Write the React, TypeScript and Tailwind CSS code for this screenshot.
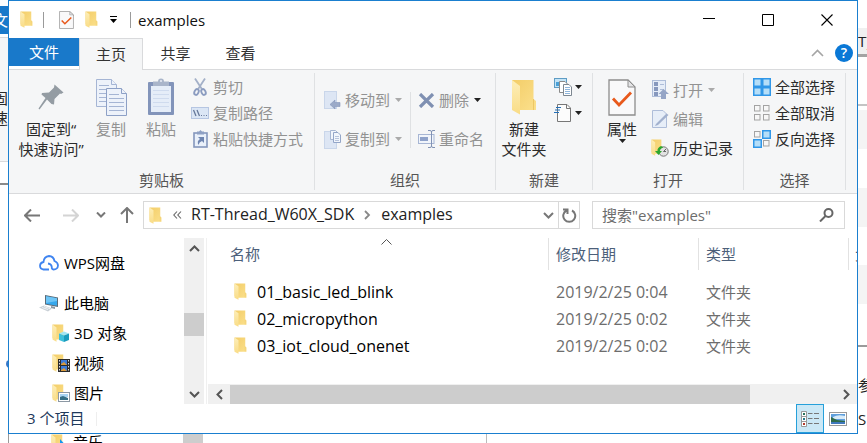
import type { ReactNode } from "react";

/* ---------- icons ---------- */

function Folder({ className = "" }: { className?: string }) {
  return (
    <svg viewBox="0 0 26 36" preserveAspectRatio="none" className={"shrink-0 " + className} aria-hidden="true">
      <defs>
        <linearGradient id="fBack" x1="0" y1="0" x2="1" y2="1">
          <stop offset="0" stopColor="#f3cd68" />
          <stop offset="1" stopColor="#fbe08c" />
        </linearGradient>
        <linearGradient id="fFlap" x1="0" y1="0" x2="0" y2="1">
          <stop offset="0" stopColor="#fdeeb8" />
          <stop offset="1" stopColor="#f9dc86" />
        </linearGradient>
      </defs>
      <path d="M1 1H22.500V20L25 22V31H8L1 28Z" fill="url(#fBack)" />
      <path d="M1 1L9 7V35.500L1 31Z" fill="url(#fFlap)" />
      <path d="M22.500 20V31" stroke="#e6bd58" strokeWidth="0.700" />
    </svg>
  );
}

function Caret({ className = "fill-[#222]" }: { className?: string }) {
  return (
    <svg width="7" height="4" viewBox="0 0 7 4" className={"shrink-0 " + className} aria-hidden="true">
      <path d="M0 0H7L3.500 4Z" />
    </svg>
  );
}

function CheckDoc({ className = "" }: { className?: string }) {
  return (
    <svg viewBox="0 0 28 37" preserveAspectRatio="none" className={"shrink-0 " + className} aria-hidden="true">
      <path d="M1 1H20L27 8V36H1Z" fill="#f9f9fa" stroke="#8d8d8d" strokeWidth="1.300" />
      <path d="M20 1V8H27Z" fill="#e4e4e6" stroke="#8d8d8d" />
      <path d="M5 19.500L11 26L23 13.500" fill="none" stroke="#e8591c" strokeWidth="2.800" />
    </svg>
  );
}

function Pin() {
  return (
    <svg width="26" height="26" viewBox="0 0 26 26" aria-hidden="true">
      <path d="M16.500 0.500L25.500 8.500L23 10L22 9.500L16.500 15L16 20.500L13.500 20L9 15.500L1.500 25.500L0.500 24.500L7.500 14L3.500 10.500L4 9L11 8.500L16 3.500Z" fill="#949ca3" />
    </svg>
  );
}

function CopyPages() {
  return (
    <svg width="31" height="37" viewBox="0 0 31 37" aria-hidden="true">
      <g fill="#edf2fa" stroke="#a5b5d4">
        <path d="M0.500 0.500H15.500L20.500 5.500V27.500H0.500Z" />
        <path d="M15.500 0.500V5.500H20.500" />
        <path d="M3 6.500H13M3 10.500H17M3 14.500H17M3 18.500H17M3 22.500H17" />
        <path d="M10.500 9.500H25.500L30.500 14.500V36.500H10.500Z" stroke="#8da0c6" />
        <path d="M25.500 9.500V14.500H30.500" stroke="#8da0c6" />
        <path d="M13 15.500H23M13 19.500H28M13 23.500H28M13 27.500H28M13 31.500H28" />
      </g>
    </svg>
  );
}

function Clipboard() {
  return (
    <svg width="26" height="38" viewBox="0 0 26 38" aria-hidden="true">
      <rect x="0" y="4" width="26" height="33" rx="1" fill="#8294ba" />
      <rect x="3" y="8" width="20" height="26" fill="#e5edf8" />
      <path d="M5 12.500H21M5 16.500H21M5 20.500H21M5 24.500H21M5 28.500H21" stroke="#cfdbee" />
      <path d="M5 3.500H10Q10 0.500 13 0.500T16 3.500H21V8H5Z" fill="#a9b5ca" />
      <circle cx="13" cy="3" r="1" fill="#e9edf4" />
    </svg>
  );
}

function Scissors() {
  return (
    <svg width="18" height="18" viewBox="0 0 18 18" aria-hidden="true">
      <path d="M4 0.500L11.500 12M14 0.500L6.500 12" stroke="#a3b0c8" strokeWidth="1.800" />
      <g fill="none" stroke="#8b9cc0" strokeWidth="1.900">
        <ellipse cx="5.500" cy="14" rx="2" ry="3" transform="rotate(25 5.500 14)" />
        <ellipse cx="12.500" cy="14" rx="2" ry="3" transform="rotate(-25 12.500 14)" />
      </g>
    </svg>
  );
}

function PathIcon() {
  return (
    <svg width="18" height="12" viewBox="0 0 18 12" aria-hidden="true">
      <rect x="0.500" y="0.500" width="17" height="11" fill="#dbe6f5" stroke="#b6c6e2" />
      <path d="M2.500 3L5 9M6 3L8.500 9" stroke="#66789a" strokeWidth="1.300" />
      <path d="M10 8.500H11M12.500 8.500H13.500M15 8.500H16" stroke="#66789a" />
    </svg>
  );
}

function ShortcutIcon() {
  return (
    <svg width="15" height="18" viewBox="0 0 15 18" aria-hidden="true">
      <rect x="1" y="3" width="13" height="14" fill="#e9f0fa" stroke="#8496bc" strokeWidth="1.600" />
      <path d="M4 1.500H6L7.500 0L9 1.500H11V4.500H4Z" fill="#8ea0c4" />
      <path d="M5 7H11V13L9 11Q6 12 5.500 15Q3.500 11 7 9Z" fill="#6f85b0" />
    </svg>
  );
}

function MoveTo() {
  return (
    <svg width="17" height="19" viewBox="0 0 17 19" aria-hidden="true">
      <rect x="0.500" y="0.500" width="12" height="17" fill="#dde6f4" stroke="#c9d6ea" />
      <path d="M6 13.500L11 9V11.500H16V15.500H11V18Z" fill="#9baac8" stroke="#8496ba" strokeWidth="0.600" />
    </svg>
  );
}

function CopyTo() {
  return (
    <svg width="17" height="19" viewBox="0 0 17 19" aria-hidden="true">
      <rect x="0.500" y="1.500" width="12" height="17" fill="#dde6f4" stroke="#c9d6ea" />
      <path d="M6.500 0.500H11.500L13.500 2.500V9.500H6.500Z" fill="#f2f6fc" stroke="#a8b7d3" />
      <path d="M9.500 2.500H14L16.500 5V12.500H9.500Z" fill="#f2f6fc" stroke="#94a6c8" />
      <path d="M11 6.500H15M11 8.500H15M11 10.500H15" stroke="#b7c4dc" />
    </svg>
  );
}

function DeleteX() {
  return (
    <svg width="17" height="15" viewBox="0 0 17 15" aria-hidden="true">
      <path d="M2 1L15 14M15 1L2 14" stroke="#7f90b2" strokeWidth="3.200" />
    </svg>
  );
}

function Rename() {
  return (
    <svg width="17" height="18" viewBox="0 0 17 18" aria-hidden="true">
      <rect x="0.500" y="4.500" width="15.500" height="9" fill="#f1f5fb" stroke="#a7b6d4" />
      <rect x="2" y="7" width="8" height="4" fill="#8fa2ca" />
      <path d="M10 0.500H12Q13.500 0.500 13.500 2V16Q13.500 17.500 12 17.500H10M17 0.500H15Q13.500 0.500 13.500 2V16Q13.500 17.500 15 17.500H17" fill="none" stroke="#8192b4" />
    </svg>
  );
}

function NewItem() {
  return (
    <svg width="18" height="18" viewBox="0 0 18 18" aria-hidden="true">
      <rect x="0.500" y="0.500" width="12" height="9" fill="#c3e4f7" stroke="#5e9cc4" />
      <rect x="2" y="4" width="5" height="4" fill="#4aa0d6" />
      <path d="M5.500 3.500H11L13.500 6V14.500H5.500Z" fill="#fff" stroke="#8a8a8a" />
      <path d="M9.500 6.500H15L17.500 9V17.500H9.500Z" fill="#fff" stroke="#7d8791" />
      <path d="M11 9.500H16M11 11.500H16M11 13.500H16M11 15.500H16" stroke="#8fb6dc" />
    </svg>
  );
}

function EasyAccess() {
  return (
    <svg width="18" height="18" viewBox="0 0 18 18" aria-hidden="true">
      <path d="M3.500 0.500H13L16.500 4V17.500H3.500Z" fill="#fcfcfc" stroke="#777" />
      <path d="M12.500 0.500V4.500H16.500" fill="none" stroke="#777" />
      <path d="M2 3.500H7M1 6H6M0 8.500H5" stroke="#2470b8" strokeWidth="1.200" />
    </svg>
  );
}

function OpenIcon() {
  return (
    <svg width="17" height="19" viewBox="0 0 17 19" aria-hidden="true">
      <rect x="0.500" y="0.500" width="13" height="16" fill="#e6edf8" stroke="#aebdd9" />
      <path d="M2 2H6V6H2ZM2 7H6V11H2ZM2 12H6V16H2Z" fill="#8798bd" />
      <path d="M8 4.500H12M8 9.500H12" stroke="#aebdd9" />
      <path d="M11.500 9L17 14H14V19H9V14H6.500Z" fill="#95a5c6" />
    </svg>
  );
}

function EditIcon() {
  return (
    <svg width="17" height="18" viewBox="0 0 17 18" aria-hidden="true">
      <path d="M0.500 0.500H11L14.500 4V17.500H0.500Z" fill="#e7eef8" stroke="#aebdd9" />
      <path d="M4 14L14.500 3.500L16.500 5L6 15L3 16Z" fill="#a2b1ce" />
    </svg>
  );
}

function HistoryIcon() {
  return (
    <div className="relative h-[18px] w-[18px]">
      <Folder className="h-[17px] w-[12px]" />
      <svg width="14" height="12" viewBox="0 0 14 12" className="absolute bottom-0 left-1" aria-hidden="true">
        <circle cx="8.500" cy="6.500" r="4.700" fill="#e2e2e2" stroke="#777" />
        <path d="M8.500 6.500L11 4M8.500 6.500H11" stroke="#666" />
        <path d="M6 1Q2 3 2.500 6H0L3.500 10L7 6H5Q5 3.500 8.500 2.500Z" fill="#2ea72e" />
      </svg>
    </div>
  );
}

function Squares({ on }: { on: boolean[] }) {
  const spots = [[1, 1], [10, 1], [1, 10], [10, 10]];
  return (
    <svg width="18" height="18" viewBox="0 0 18 18" aria-hidden="true">
      {spots.map(([x, y], i) =>
        on[i] ? (
          <rect key={i} x={x - 0.25} y={y - 0.25} width="7.500" height="7.500" fill="#b5def8" stroke="#3097e8" strokeWidth="1.500" />
        ) : (
          <rect key={i} x={x + 0.5} y={y + 0.5} width="5.500" height="5.500" fill="#f7f7f7" stroke="#a3a3a3" />
        ),
      )}
    </svg>
  );
}

function Chevron({ d, w, h, className, sw = 1.6 }: { d: string; w: number; h: number; className: string; sw?: number }) {
  return (
    <svg width={w} height={h} viewBox={`0 0 ${w} ${h}`} fill="none" strokeWidth={sw} className={"shrink-0 " + className} aria-hidden="true">
      <path d={d} />
    </svg>
  );
}

function Cloud() {
  return (
    <svg width="20" height="16" viewBox="0 0 20 16" fill="none" stroke="#3f84f0" strokeWidth="1.800" aria-hidden="true">
      <path d="M10 14.500H4.500Q1 14 1 10.800Q1.200 7.500 4.500 7Q5 1.500 10 1Q14.500 1.200 15.500 6Q19 7.500 19 10.500Q18.700 14.500 14.500 14.500Q12.500 14.300 12.800 12Q12.500 9 9 8.500" />
    </svg>
  );
}

function Computer() {
  return (
    <svg width="20" height="18" viewBox="0 0 20 18" aria-hidden="true">
      <path d="M6 1L19 3.500V13L6 10.500Z" fill="#5a6b78" />
      <path d="M7 2.200L18 4.300V11.800L7 9.700Z" fill="#37a8ec" />
      <path d="M7 2.200L18 4.300V7L7 9Z" fill="#6ec5f6" />
      <path d="M12 12L16 13V15L12 14Z" fill="#8a97a1" />
      <path d="M0 13.500L5 11.500L13 14.500L9 17.500Z" fill="#c9d0d6" />
      <path d="M3 13.500L9 15.500M5 12.500L11 14.700" stroke="#eef1f3" />
    </svg>
  );
}

function SubFolder({ kind }: { kind: string }) {
  return (
    <div className="relative h-[18px] w-[17px] shrink-0">
      <Folder className="h-[18px] w-[13px]" />
      <svg width="12" height="13" viewBox="0 0 12 13" className="absolute -right-px bottom-0" aria-hidden="true">
        {kind === "3d" && (
          <g>
            <path d="M1 4.500L6 2.500L11 4.500L6 6.500Z" fill="#a4e6f2" />
            <path d="M1 4.500L6 6.500V13L1 11Z" fill="#3fc0da" />
            <path d="M11 4.500L6 6.500V13L11 11Z" fill="#1b9cbd" />
          </g>
        )}
        {kind === "video" && (
          <g>
            <rect width="12" height="13" fill="#2b2b2b" />
            <rect x="3" y="1" width="6" height="5" fill="#3d7cd8" />
            <rect x="3" y="7" width="6" height="5" fill="#3d7cd8" />
            <path d="M3 5L6 3L9 6H3ZM3 11L6 9L9 12H3Z" fill="#d99a3c" />
            <path d="M1.500 1V13M10.500 1V13" stroke="#ddd" strokeDasharray="1.500 1.500" />
          </g>
        )}
        {kind === "image" && (
          <g>
            <rect x="0.500" y="3.500" width="11" height="9" fill="#fff" stroke="#8c98a4" />
            <rect x="2" y="5" width="8" height="3" fill="#a9d4f2" />
            <path d="M2 8L5 7L10 9V11H2Z" fill="#356f86" />
          </g>
        )}
        {kind === "music" && <path d="M3 0L11 9V13H3Z" fill="#1296f0" />}
      </svg>
    </div>
  );
}

/* ---------- ribbon parts ---------- */

function Group({ label, width, children }: { label: string; width: string; children: ReactNode }) {
  return (
    <section className={"flex shrink-0 flex-col border-r border-[#dfe1e3] " + width}>
      <div className="flex h-24 pt-px">{children}</div>
      <h2 className="h-[21px] text-center leading-[22px] text-[#555]">{label}</h2>
    </section>
  );
}

function BigButton({ icon, lines, width, off, caret }: { icon: ReactNode; lines: string[]; width: string; off?: boolean; caret?: boolean }) {
  return (
    <button className={"flex flex-col items-center whitespace-nowrap pt-1 " + width + (off ? " text-[#929292]" : " text-[#2b2b2b]")}>
      <span className="flex h-[38px] items-center">{icon}</span>
      <span className="mt-[3px] flex flex-col items-center leading-5">
        {lines.map((t) => (
          <span key={t}>{t}</span>
        ))}
      </span>
      {caret && <Caret />}
    </button>
  );
}

function Item({ icon, text, off, caret, tall }: { icon: ReactNode; text: string; off?: boolean; caret?: string; tall?: boolean }) {
  return (
    <button className={"flex items-center whitespace-nowrap " + (tall ? "h-[29px]" : "h-[26px]") + (off ? " text-[#929292]" : " text-[#2b2b2b]")}>
      <span className="mr-1 flex w-[18px] justify-center">{icon}</span>
      {text}
      {caret && <Caret className={"ml-[5px] " + caret} />}
    </button>
  );
}

function Ribbon() {
  return (
    <div className="flex border-b border-[#d9dadc] bg-[#f5f6f7] pt-[3px] pb-[3px]">
      <Group label="剪贴板" width="w-[306px]">
        <BigButton width="w-[84px]" icon={<Pin />} lines={["固定到“", "快速访问”"]} />
        <BigButton width="w-[36px]" icon={<CopyPages />} lines={["复制"]} off />
        <BigButton width="w-[64px]" icon={<Clipboard />} lines={["粘贴"]} off />
        <div className="ml-[-2px] flex flex-col">
          <Item icon={<Scissors />} text="剪切" off />
          <Item icon={<PathIcon />} text="复制路径" off />
          <Item icon={<ShortcutIcon />} text="粘贴快捷方式" off />
        </div>
      </Group>
      <Group label="组织" width="w-[181px]">
        <div className="mt-[13px] ml-2 flex flex-col gap-[13px]">
          <Item icon={<MoveTo />} text="移动到" off caret="fill-[#aaa]" />
          <Item icon={<CopyTo />} text="复制到" off caret="fill-[#aaa]" />
        </div>
        <div className="mt-[18px] mr-[6px] ml-2 h-14 w-px bg-[#dfe1e3]" />
        <div className="mt-[13px] flex flex-col gap-[13px]">
          <Item icon={<DeleteX />} text="删除" off caret="fill-[#222]" />
          <Item icon={<Rename />} text="重命名" off />
        </div>
      </Group>
      <Group label="新建" width="w-[97px]">
        <BigButton width="w-[56px]" icon={<Folder className="h-9 w-[26px]" />} lines={["新建", "文件夹"]} />
        <div className="flex flex-col pl-0.5">
          <button aria-label="新建项目" className="flex h-[26px] items-center gap-[3px]"><NewItem /><Caret /></button>
          <button aria-label="轻松访问" className="flex h-[26px] items-center gap-[3px]"><EasyAccess /><Caret /></button>
        </div>
      </Group>
      <Group label="打开" width="w-[151px]">
        <BigButton width="w-[58px]" icon={<CheckDoc className="h-[37px] w-7" />} lines={["属性"]} caret />
        <div className="mt-px flex flex-col">
          <Item icon={<OpenIcon />} text="打开" off caret="fill-[#aaa]" tall />
          <Item icon={<EditIcon />} text="编辑" off tall />
          <Item icon={<HistoryIcon />} text="历史记录" tall />
        </div>
      </Group>
      <Group label="选择" width="w-[102px]">
        <div className="ml-[9px] flex flex-col">
          <Item icon={<Squares on={[true, true, true, true]} />} text="全部选择" />
          <Item icon={<Squares on={[false, false, false, false]} />} text="全部取消" />
          <Item icon={<Squares on={[false, true, true, false]} />} text="反向选择" />
        </div>
      </Group>
    </div>
  );
}

/* ---------- window chrome ---------- */

function TitleBar() {
  return (
    <header className="flex h-[37px] items-center pl-[11px]">
      <Folder className="h-[17px] w-[13px]" />
      <span className="mr-[15px] ml-[10px] h-4 w-px bg-[#9a9a9a]" />
      <CheckDoc className="h-[18px] w-[15px]" />
      <Folder className="ml-[11px] h-[17px] w-[13px]" />
      <button aria-label="自定义快速访问工具栏" className="ml-3 flex flex-col items-center gap-0.5">
        <span className="h-px w-[7px] bg-black" />
        <Caret className="fill-black" />
      </button>
      <span className="mx-[7px] ml-[13px] h-4 w-px bg-[#9a9a9a]" />
      <h1 className="text-[#111]">examples</h1>
      <div className="ml-auto flex h-full pr-px">
        <button aria-label="最小化" className="flex w-[59px] items-center justify-center">
          <Chevron w={12} h={13} d="M0 5.5H12" sw={1} className="stroke-black" />
        </button>
        <button aria-label="最大化" className="flex w-[59px] items-center justify-center">
          <Chevron w={12} h={12} d="M0.5 0.5H11.5V11.5H0.5Z" sw={1} className="stroke-black" />
        </button>
        <button aria-label="关闭" className="flex w-[59px] items-center justify-center">
          <Chevron w={12} h={12} d="M0.5 0.5L11.5 11.5M11.5 0.5L0.5 11.5" sw={1.1} className="stroke-black" />
        </button>
      </div>
    </header>
  );
}

function Tabs() {
  return (
    <nav className="flex h-8 border-b border-[#d9dadc] text-[#333]">
      <button className="h-7 w-[70px] bg-[#1979ca] text-white">文件</button>
      <button className="z-10 -mb-px w-16 border border-b-0 border-[#d9dadc] bg-[#f5f6f7] pb-0.5">主页</button>
      <button className="w-[65px] pb-0.5">共享</button>
      <button className="w-[65px] pb-0.5">查看</button>
      <div className="ml-auto flex items-center pr-1 pb-0.5">
        <button aria-label="折叠功能区" className="mr-[11px]">
          <Chevron w={13} h={8} d="M1 7L6.5 1.500L12 7" className="stroke-[#a5a5a5]" />
        </button>
        <button aria-label="帮助" className="flex size-[18px] items-center justify-center rounded-full bg-[#0a78d6] text-[14px] font-semibold text-white">?</button>
      </div>
    </nav>
  );
}

function AddressRow() {
  return (
    <div className="flex h-11 pt-[7px] pr-3 pl-[15px]">
      <div className="flex h-7 w-[119px] shrink-0 items-center">
        <button aria-label="后退"><Chevron w={16} h={13} d="M7 0.500L1 6.500L7 12.500M1 6.500H16" sw={2} className="stroke-[#777]" /></button>
        <button aria-label="前进" className="ml-[23px]"><Chevron w={16} h={13} d="M9 0.500L15 6.500L9 12.500M15 6.500H0" sw={2} className="stroke-[#d4d4d4]" /></button>
        <button aria-label="最近位置" className="ml-[17px]"><Chevron w={10} h={6} d="M1 0.500L5 4.500L9 0.500" sw={2} className="stroke-[#777]" /></button>
        <button aria-label="上移" className="ml-[14px]"><Chevron w={14} h={16} d="M1 7L7 1L13 7M7 1V16" sw={2} className="stroke-[#777]" /></button>
      </div>
      <div className="flex h-7 flex-1 items-center border border-[#d9d9d9] pl-[5px] text-base leading-5 text-[#222]">
        <Folder className="h-[17px] w-[13px]" />
        <Chevron w={9} h={8} d="M4 0.500L0.800 4L4 7.500M8 0.500L4.800 4L8 7.500" sw={1.1} className="ml-[11px] stroke-[#666]" />
        <a href="#sdk" className="ml-[9px] pb-0.5 whitespace-nowrap">RT-Thread_W60X_SDK</a>
        <Chevron w={7} h={10} d="M1 1L5 5L1 9" sw={1.8} className="mx-[10px] stroke-[#888]" />
        <a href="#examples" className="pb-0.5">examples</a>
        <button aria-label="历史位置" className="mr-1 ml-auto"><Chevron w={11} h={7} d="M1 1L5.500 5.500L10 1" sw={2} className="stroke-[#777]" /></button>
        <button aria-label="刷新" className="flex h-full w-[21px] items-center justify-center border-l border-[#d9d9d9]">
          <svg width="15" height="15" viewBox="0 0 15 15" fill="none" stroke="#777" strokeWidth="2" aria-hidden="true">
            <path d="M10 2.500A6 6 0 1 1 4.500 2.500M1 1.500H5.500V6" />
          </svg>
        </button>
      </div>
      <label className="ml-3 flex h-7 w-[253px] items-center border border-[#d9d9d9] pr-[10px] pl-[9px]">
        <input type="search" aria-label="搜索" placeholder={'搜索"examples"'} className="w-full min-w-0 bg-transparent outline-none placeholder:text-[#6d6d6d]" />
        <svg width="15" height="14" viewBox="0 0 15 14" fill="none" stroke="#666" strokeWidth="2" className="shrink-0" aria-hidden="true">
          <circle cx="9.500" cy="5" r="4" />
          <path d="M6.500 8L1 13.500" />
        </svg>
      </label>
    </div>
  );
}

function NavPane() {
  return (
    <aside className="flex w-[195px] shrink-0">
      <ul className="flex-1 overflow-hidden pt-[10px] text-black">
        <li className="flex h-[30px] items-center gap-[5px] pl-[30px]"><Cloud />WPS网盘</li>
        <li className="mt-[10px] flex h-[30px] items-center gap-[5px] pl-[30px]"><Computer />此电脑</li>
        <li className="flex h-[30px] items-center gap-[5px] pl-[43px]"><SubFolder kind="3d" />3D 对象</li>
        <li className="flex h-[30px] items-center gap-[5px] pl-[43px]"><SubFolder kind="video" />视频</li>
        <li className="flex h-[30px] items-center gap-[5px] pl-[43px]"><SubFolder kind="image" />图片</li>
      </ul>
      <div className="flex w-5 flex-col items-center bg-[#f0f0f0]">
        <button aria-label="向上滚动" className="flex h-5 items-center"><Chevron w={11} h={7} d="M1 6L5.500 1.500L10 6" sw={2} className="stroke-[#555]" /></button>
        <span className="mt-[55px] h-[23px] w-full bg-[#cdcdcd]" />
        <button aria-label="向下滚动" className="mt-auto flex h-5 items-center"><Chevron w={11} h={7} d="M1 1L5.500 5.500L10 1" sw={2} className="stroke-[#555]" /></button>
      </div>
    </aside>
  );
}

const files = [
  { name: "01_basic_led_blink", date: "2019/2/25 0:04" },
  { name: "02_micropython", date: "2019/2/25 0:02" },
  { name: "03_iot_cloud_onenet", date: "2019/2/25 0:02" },
];

function FileList() {
  const head = "h-8 overflow-hidden whitespace-nowrap pt-1 leading-6";
  return (
    <main className="ml-0.5 flex min-w-0 flex-1 flex-col border-l border-[#f0f0f0] pl-px">
      <table className="w-full table-fixed text-left">
        <colgroup>
          <col />
          <col className="w-[150px]" />
          <col className="w-[150px]" />
          <col className="w-[8px]" />
        </colgroup>
        <thead className="text-[#4c607a]">
          <tr className="h-[40px] align-top">
            <th className="p-0 font-normal">
              <div className={head + " relative border-r border-[#e2e2e2] pl-[22px]"}>
                名称
                <Chevron w={11} h={6} d="M0.500 5.500L5.500 0.500L10.500 5.500" sw={1} className="absolute top-px left-[51%] stroke-[#555]" />
              </div>
            </th>
            <th className="p-0 font-normal"><div className={head + " border-r border-[#e2e2e2] pl-[7px]"}>修改日期</div></th>
            <th className="p-0 font-normal"><div className={head + " border-r border-[#e2e2e2] pl-[7px]"}>类型</div></th>
            <th className="p-0 font-normal"><div className={head + " pl-[6px]"}>大小</div></th>
          </tr>
        </thead>
        <tbody className="text-[#6d6d6d]">
          {files.map((f) => (
            <tr key={f.name} className="h-[27px]">
              <td className="p-0">
                <div className="flex items-center gap-[10px] pl-[26px] text-base leading-5 text-black">
                  <Folder className="h-[17px] w-[13px]" />
                  {f.name}
                </div>
              </td>
              <td className="p-0 pl-[7px] text-base leading-5 whitespace-nowrap">{f.date}</td>
              <td className="p-0 pl-[7px]">文件夹</td>
              <td className="p-0" />
            </tr>
          ))}
        </tbody>
      </table>
      <div className="mt-auto flex h-5 items-center bg-[#f0f0f0]">
        <button aria-label="向左滚动" className="flex w-[22px] justify-center"><Chevron w={7} h={11} d="M6 1L1.500 5.500L6 10" sw={2} className="stroke-[#555]" /></button>
        <div className="h-[19px] flex-1"><div className="h-full w-[86%] bg-[#cdcdcd]" /></div>
        <button aria-label="向右滚动" className="flex w-[22px] justify-center"><Chevron w={7} h={11} d="M1 1L5.500 5.500L1 10" sw={2} className="stroke-[#555]" /></button>
      </div>
    </main>
  );
}

function StatusBar() {
  return (
    <footer className="flex h-[29px] items-center pl-[18px] text-[#1e395b]">
      <span className="pb-0.5">3 个项目</span>
      <span className="ml-3 h-[14px] w-px bg-[#eee]" />
      <button aria-label="详细信息" className="ml-auto flex h-full w-7 items-center justify-center border border-[#26a0da] bg-[#cbe8f6]">
        <svg width="18" height="16" viewBox="0 0 18 16" aria-hidden="true">
          <path d="M0.500 0.500H5.500V15.500H0.500ZM0.500 5.500H5.500M0.500 10.500H5.500" fill="#fff" stroke="#999" />
          <path d="M2 2H4V4H2Z" fill="#27735e" />
          <path d="M2 7H4V9H2Z" fill="#287a8c" />
          <path d="M2 12H4V14H2Z" fill="#b43a2c" />
          <path d="M7 2.500H11.500M13 2.500H18M7 7.500H11.500M13 7.500H18M7 12.500H11.500M13 12.500H18" stroke="#777" />
        </svg>
      </button>
      <button aria-label="大图标" className="mr-[10px] ml-[5px]">
        <svg width="18" height="14" viewBox="0 0 18 14" aria-hidden="true">
          <rect x="0.500" y="0.500" width="17" height="13" fill="#fff" stroke="#999" />
          <rect x="2" y="2" width="14" height="10" fill="#5f9fdc" />
          <path d="M4 5Q9 2 16 4V7H4Z" fill="#d8ebf8" />
          <path d="M2 5L8 8L16 9V10H2Z" fill="#2f6b4a" />
          <path d="M2 10H16V12H2Z" fill="#3f78bd" />
        </svg>
      </button>
    </footer>
  );
}

/* ---------- what shows of the windows behind ---------- */

function LeftEdge() {
  return (
    <div className="flex w-2 shrink-0 flex-col overflow-hidden">
      <div className="mt-1.5 flex h-7 items-center justify-end bg-[#1979ca] text-white">文</div>
      <div className="mt-[3px] flex h-[125px] flex-col items-end border-y border-[#d9dadc] bg-[#f5f6f7] pt-[50px] leading-5 text-[#2b2b2b]">
        <span>固</span>
        <span>速</span>
      </div>
      <div className="mt-[21px] h-0.5 bg-[#8a8a8a]" />
      <div className="mt-[175px] -mr-1.5 size-2 shrink-0 self-end rounded-full bg-[#3a78c8]" />
    </div>
  );
}

function RightEdge() {
  return (
    <div className="flex w-[9px] shrink-0 flex-col overflow-hidden whitespace-nowrap text-[#222]">
      <div className="mt-7 flex h-[26px] items-center bg-[#f0f0f0]">T)</div>
      <div className="h-[3px] bg-[#a3a3a3]" />
      <div className="mt-[47px] h-0.5 bg-[#c4c4c4]" />
      <div className="mt-1 h-[39px] bg-[#f4f4f4]" />
      <div className="mt-[39px] h-[39px] bg-[#f4f4f4]" />
      <div className="mt-[38px] h-[39px] bg-[#f4f4f4]" />
      <div className="mt-[41px] h-0.5 bg-[#9a9a9a]" />
      <div className="mt-[28px] leading-5">参</div>
      <div className="mt-[14px] leading-5">S</div>
    </div>
  );
}

function BottomEdge() {
  return (
    <div className="flex h-[9px] shrink-0 overflow-hidden bg-white pl-2">
      <div className="flex w-[175px] gap-[5px] border-l border-[#999] pl-[42px] leading-4 text-black">
        <SubFolder kind="music" />
        音乐
      </div>
      <div className="w-5 bg-[#cdcdcd]" />
      <div className="ml-[283px] w-px bg-[#bbb]" />
    </div>
  );
}

export default function App() {
  return (
    <div className="flex h-screen flex-col overflow-hidden bg-white font-['Open_Sans','Noto_Sans_CJK_SC',sans-serif] text-[15px] leading-5">
      <div className="flex min-h-0 flex-1">
        <LeftEdge />
        <div className="flex min-w-0 flex-1 flex-col border border-[#1a7fcf] bg-white">
          <TitleBar />
          <Tabs />
          <Ribbon />
          <AddressRow />
          <div className="flex min-h-0 flex-1">
            <NavPane />
            <FileList />
          </div>
          <StatusBar />
        </div>
        <RightEdge />
      </div>
      <BottomEdge />
    </div>
  );
}
